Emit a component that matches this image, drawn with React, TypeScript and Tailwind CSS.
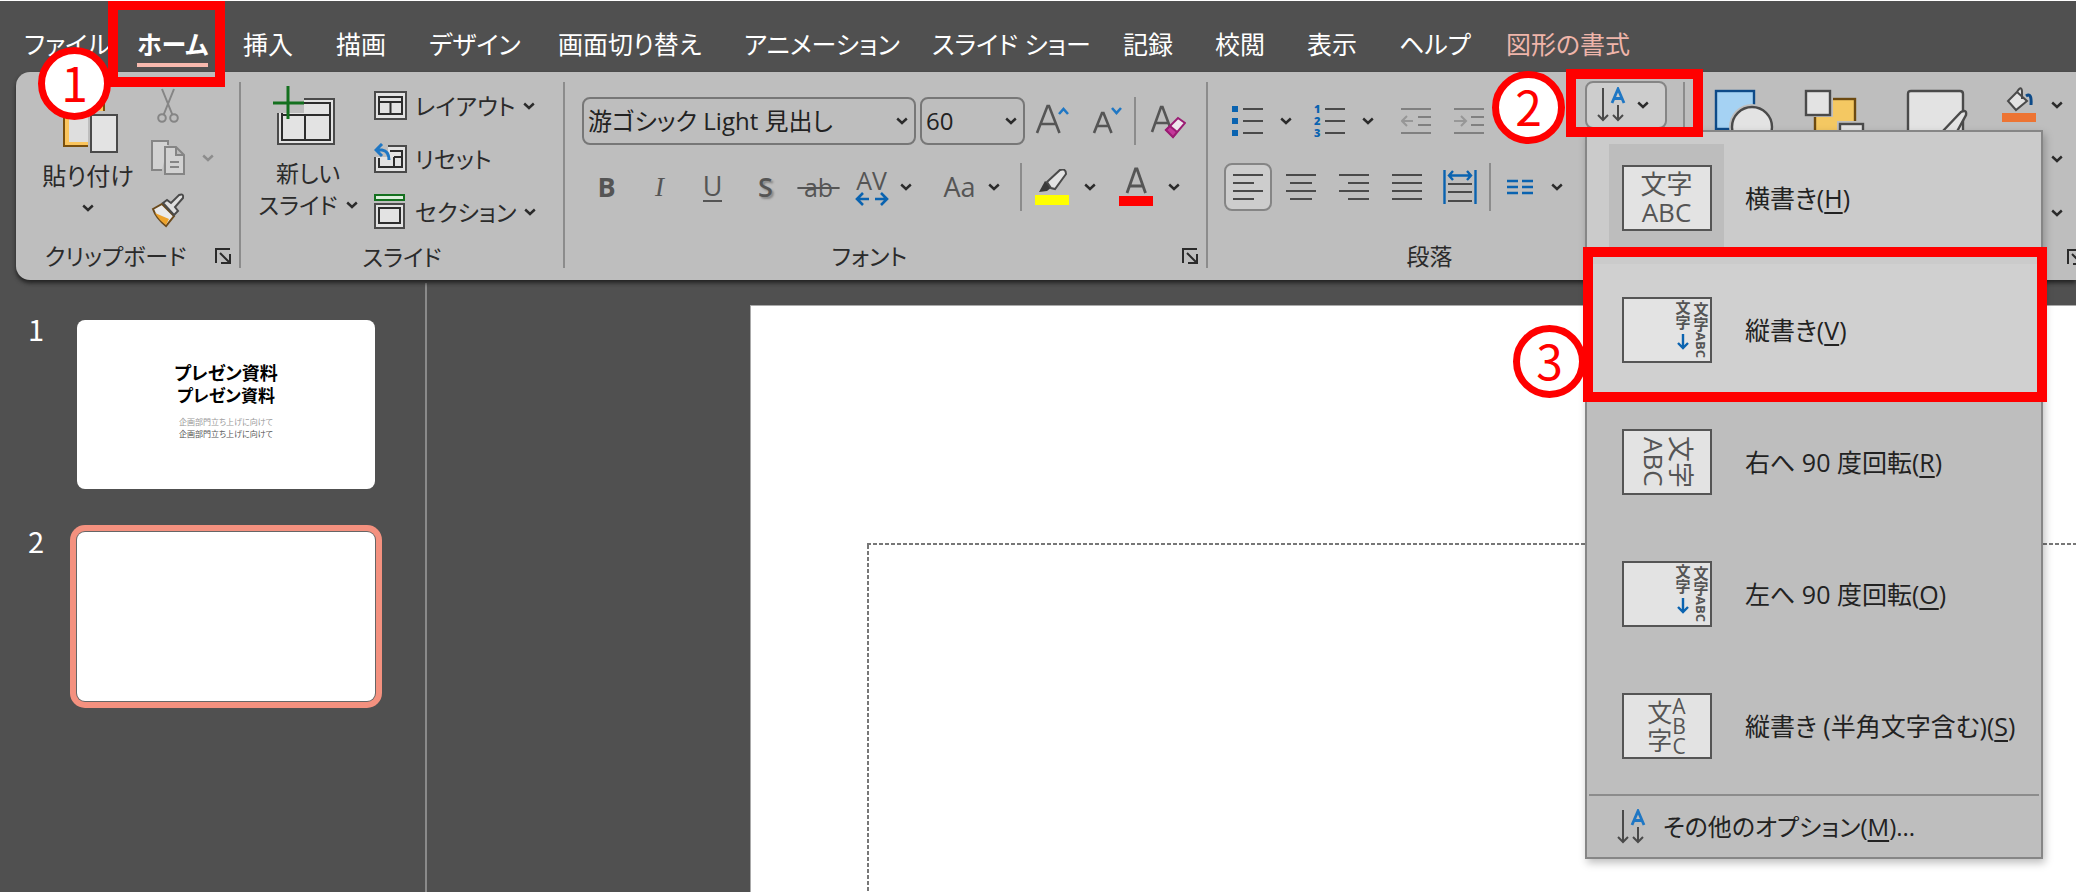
import React from "react";

type P = { children?: React.ReactNode; className?: string };

const INK = "#4a4a4a";
const BLUE = "#0a63b0";

function Chevron({ muted = false }: { muted?: boolean }) {
  return (
    <svg width="12" height="8" viewBox="0 0 12 8" fill="none" aria-hidden="true" className="shrink-0">
      <path d="M1.2 1.5 L6 6 L10.8 1.5" stroke={muted ? "#8d8d8d" : "#2b2b2b"} strokeWidth="2.4" />
    </svg>
  );
}

function Drop({ label, muted }: { label: string; muted?: boolean }) {
  return (
    <button aria-label={label} className="flex h-8 w-4 shrink-0 items-center justify-center">
      <Chevron muted={muted} />
    </button>
  );
}

function Tool({ label, children, className = "w-[53px]" }: P & { label: string }) {
  return (
    <button aria-label={label} className={`flex h-12 shrink-0 items-center justify-center ${className}`}>
      {children}
    </button>
  );
}

function Launcher({ label }: { label: string }) {
  return (
    <button aria-label={label} className="flex w-8 shrink-0 items-center justify-center">
      <svg width="18" height="18" viewBox="0 0 18 18" fill="none" stroke="#2b2b2b" strokeWidth="2">
        <path d="M2 16V2H16M6 6L15 15M16 7V16H7" />
      </svg>
    </button>
  );
}

function Group({ title, launcher = true, className, children }: P & { title: string; launcher?: boolean }) {
  return (
    <section className={`flex shrink-0 flex-col ${className}`} aria-label={title}>
      {children}
      <div className="mt-auto flex h-11 items-center pb-1 text-[23px] leading-8">
        <h2 className="flex-1 text-center whitespace-nowrap">{title}</h2>
        {launcher && <Launcher label={`${title}の設定`} />}
      </div>
    </section>
  );
}

function Divider() {
  return <div className="mt-[10px] h-[186px] w-[2px] shrink-0 bg-[#8c8c8c]" />;
}

function SmallDivider() {
  return <div className="h-12 w-[2px] shrink-0 bg-[#8c8c8c]" />;
}

function Lines({ rows, color = INK }: { rows: [number, number][]; color?: string }) {
  return (
    <svg width="30" height="30" viewBox="0 0 30 30" stroke={color} strokeWidth="2" aria-hidden="true">
      {rows.map(([a, b], i) => (
        <path key={i} d={`M${a} ${3 + i * 8}H${b}`} />
      ))}
    </svg>
  );
}

function DirectionIcon() {
  return (
    <svg width="30" height="36" viewBox="0 0 30 36" fill="none" stroke={INK} strokeWidth="2" aria-hidden="true">
      <path d="M6 1V33M1 28L6 33L11 28" />
      <path d="M21 18V33M16 28L21 33L26 28" />
      <path d="M15 16L21 2L27 16M17 11.5H25" stroke="#1f77c4" strokeWidth="2.8" />
    </svg>
  );
}

const tabs = [
  { name: "ファイル", w: "w-[113px]" },
  { name: "ホーム", w: "w-[106px]", active: true },
  { name: "挿入", w: "w-[93px]" },
  { name: "描画", w: "w-[93px]" },
  { name: "デザイン", w: "w-[129px]" },
  { name: "画面切り替え", w: "w-[186px]" },
  { name: "アニメーション", w: "w-[188px]" },
  { name: "スライド ショー", w: "w-[191px]" },
  { name: "記録", w: "w-[92px]" },
  { name: "校閲", w: "w-[92px]" },
  { name: "表示", w: "w-[92px]" },
  { name: "ヘルプ", w: "w-[107px]" },
  { name: "図形の書式", w: "w-[140px]", accent: true },
];

function Tabs() {
  return (
    <nav className="flex h-[71px] shrink-0 items-start pt-[22px] pl-6 text-[25px] leading-[42px] text-white">
      {tabs.map((t) => (
        <div key={t.name} className={`shrink-0 ${t.w}`}>
          <button
            className={
              t.active
                ? "border-b-4 border-[#f8b9ae] leading-[38px] font-bold whitespace-nowrap"
                : t.accent
                  ? "whitespace-nowrap text-[#efb5aa]"
                  : "whitespace-nowrap"
            }
          >
            {t.name}
          </button>
        </div>
      ))}
    </nav>
  );
}

function Clipboard() {
  return (
    <Group title="クリップボード" className="w-[223px] pl-2">
      <div className="flex gap-3 pt-[10px] pl-4">
        <button className="flex w-[96px] flex-col items-center text-[24px] leading-9 whitespace-nowrap">
          <svg width="60" height="72" viewBox="0 0 60 72" fill="none" aria-hidden="true" className="mb-1">
            <path d="M6 18H46V64H6Z" fill="#fbc55d" stroke="#7a4f0c" strokeWidth="2" />
            <path d="M11 22H41V60H11Z" fill="#dedede" />
            <rect x="30" y="29" width="32" height="43" fill="#bebebe" />
            <rect x="33" y="33" width="26" height="37" fill="#e3e3e3" stroke={INK} strokeWidth="2" />
          </svg>
          <span>貼り付け</span>
          <span className="flex h-7 items-center">
            <Chevron />
          </span>
        </button>
        <div className="flex flex-col gap-1">
          <Tool label="切り取り" className="w-10">
            <svg width="22" height="36" viewBox="0 0 22 36" fill="none" stroke="#858585" strokeWidth="2">
              <path d="M5 1L15.500 27M17 1L6.500 27" />
              <circle cx="5" cy="30" r="3.800" />
              <circle cx="17" cy="30" r="3.800" />
            </svg>
          </Tool>
          <div className="flex items-center gap-3">
            <Tool label="コピー" className="w-10">
              <svg width="36" height="36" viewBox="0 0 36 36" fill="#d2d2d2" stroke="#858585" strokeWidth="2">
                <path d="M12 30H2V1H18V5" />
                <path d="M15 7H26L34 15V34H15Z M26 7V15H34" />
                <path d="M20 22H29M20 27H29" />
              </svg>
            </Tool>
            <Drop label="コピーのオプション" muted />
          </div>
          <Tool label="書式のコピー" className="w-10">
            <svg width="36" height="36" viewBox="0 0 36 36" aria-hidden="true">
              <path d="M3 17L12 12L24 24L16 34Q6 26 3 17Z" fill="#e9e9e9" stroke="#6b4a1c" strokeWidth="2" />
              <path d="M5 21L19 27L16 33Q9 28 5 21Z" fill="#eda22a" />
              <path d="M13 11L17 8L21 11L29 3Q34 1 33 6L25 15L28 19L24 23Z" fill="#dedede" stroke={INK} strokeWidth="2" />
            </svg>
          </Tool>
        </div>
      </div>
    </Group>
  );
}

function SlideRow({ icon, label, drop = true }: { icon: React.ReactNode; label: string; drop?: boolean }) {
  return (
    <button className="flex h-[53px] items-center gap-2 whitespace-nowrap">
      {icon}
      <span>{label}</span>
      {drop && <Chevron />}
    </button>
  );
}

function Slides() {
  return (
    <Group title="スライド" launcher={false} className="w-[322px]">
      <div className="flex gap-4 pt-[7px] pl-[17px] text-[23px] leading-8">
        <button className="flex w-[100px] flex-col items-center pt-[6px] whitespace-nowrap">
          <svg width="72" height="62" viewBox="0 0 72 62" fill="none" aria-hidden="true" className="mb-[10px]">
            <path d="M6 14H62V59H6Z" fill="#e3e3e3" stroke={INK} strokeWidth="2" />
            <path d="M10 18H58V55H10ZM10 30H58M33 30V55" stroke="#2d2d2d" strokeWidth="2" />
            <path d="M0 9H32V28H0Z" fill="#bebebe" />
            <path d="M16 1V34M1 18H32" stroke="#14701f" strokeWidth="3" />
          </svg>
          <span>新しい</span>
          <span className="flex items-center gap-2">
            スライド
            <Chevron />
          </span>
        </button>
        <div className="flex flex-col items-start">
          <SlideRow
            label="レイアウト"
            icon={
              <svg width="33" height="29" viewBox="0 0 33 29" fill="none" aria-hidden="true">
                <rect x="1" y="1" width="31" height="27" fill="#e3e3e3" stroke={INK} strokeWidth="2" />
                <path d="M5 6H28V23H5ZM5 11H28M16.500 11V23" stroke="#2d2d2d" strokeWidth="2" />
              </svg>
            }
          />
          <SlideRow
            label="リセット"
            drop={false}
            icon={
              <svg width="33" height="31" viewBox="0 0 33 31" fill="none" aria-hidden="true">
                <rect x="1" y="3" width="31" height="26" fill="#e3e3e3" stroke={INK} strokeWidth="2" />
                <path d="M5 15V24H28V8H16M20 14H28M20 14V24" stroke="#2d2d2d" strokeWidth="2" />
                <path d="M0 0H14V14H0Z" fill="#bebebe" />
                <path d="M8 1L2 7L8 13M2 7H8Q15 8 15 17" stroke="#1f77c4" strokeWidth="3" />
              </svg>
            }
          />
          <SlideRow
            label="セクション"
            icon={
              <svg width="33" height="35" viewBox="0 0 33 35" fill="none" aria-hidden="true">
                <rect x="1" y="1" width="29" height="5" fill="#dcefdc" stroke="#14701f" strokeWidth="2" />
                <rect x="1" y="10" width="29" height="24" fill="#e3e3e3" stroke={INK} strokeWidth="2" />
                <rect x="5" y="14" width="21" height="15" stroke="#2d2d2d" strokeWidth="2" />
              </svg>
            }
          />
        </div>
      </div>
    </Group>
  );
}

function Picker({ label, value, className }: { label: string; value: string; className: string }) {
  return (
    <label className={`flex h-12 shrink-0 items-center rounded-lg border-2 border-[#777] pr-[6px] ${className}`}>
      <select aria-label={label} defaultValue={value} className="min-w-0 flex-1 appearance-none bg-transparent pl-1 text-[24px] leading-8 text-[#222]">
        <option>{value}</option>
      </select>
      <Chevron />
    </label>
  );
}

function FontGroup() {
  return (
    <Group title="フォント" className="w-[641px] pt-[25px]">
      <div className="flex items-center pl-[17px]">
        <Picker label="フォント名" value="游ゴシック Light 見出し" className="w-[334px]" />
        <Picker label="フォント サイズ" value="60" className="ml-1 w-[105px]" />
        <Tool label="フォント サイズの拡大" className="w-14">
          <svg width="36" height="34" viewBox="0 0 36 34" fill="none">
            <path d="M2 29L12.500 2H14L24.500 29M6 20H20.500" stroke="#555" strokeWidth="2.600" />
            <path d="M24 10L28.500 5L33 10" stroke="#1f77c4" strokeWidth="2.600" />
          </svg>
        </Tool>
        <Tool label="フォント サイズの縮小">
          <svg width="32" height="34" viewBox="0 0 32 34" fill="none">
            <path d="M2 29L10 9H11.500L19.500 29M5 22H16.500" stroke="#555" strokeWidth="2.600" />
            <path d="M20 4L24.500 9L29 4" stroke="#1f77c4" strokeWidth="2.600" />
          </svg>
        </Tool>
        <SmallDivider />
        <Tool label="書式のクリア" className="ml-1 w-14">
          <svg width="36" height="36" viewBox="0 0 36 36" fill="none">
            <path d="M2 29L11 4H12.500L20 24M5.500 20H18" stroke="#555" strokeWidth="2.600" />
            <path d="M16 27L28 15L35 20L23 34Z" fill="#efe6ed" stroke="#9b1c73" strokeWidth="2" />
            <path d="M16 27L20 23L27 29L23 34Z" fill="#c4389a" stroke="#9b1c73" strokeWidth="2" />
          </svg>
        </Tool>
      </div>
      <div className="mt-[18px] flex items-center pl-[15px] text-[27px] leading-8 text-[#555]">
        <Tool label="太字">
          <b>B</b>
        </Tool>
        <Tool label="斜体">
          <i className="font-['Liberation_Serif',serif]">I</i>
        </Tool>
        <Tool label="下線">
          <span className="border-b-2 border-[#555] leading-7">U</span>
        </Tool>
        <Tool label="影">
          <span className="font-semibold [text-shadow:2px_2px_2px_#888]">S</span>
        </Tool>
        <Tool label="取り消し線">
          <s className="text-[25px] decoration-2">&nbsp;ab&nbsp;</s>
        </Tool>
        <Tool label="文字の間隔">
          <span className="flex flex-col items-center text-[25px] leading-6">
            AV
            <svg width="34" height="14" viewBox="0 0 34 14" fill="none" stroke={BLUE} strokeWidth="2.600" aria-hidden="true">
              <path d="M8 1L2 7L8 13M2 7H14M26 1L32 7L26 13M32 7H20" />
            </svg>
          </span>
        </Tool>
        <Drop label="文字の間隔のオプション" />
        <Tool label="文字種の変換" className="ml-[19px] w-[53px]">
          Aa
        </Tool>
        <Drop label="文字種の変換のオプション" />
        <div className="w-[18px]" />
        <SmallDivider />
        <Tool label="蛍光ペンの色" className="w-[60px]">
          <svg width="34" height="36" viewBox="0 0 34 36" fill="none">
            <rect y="26" width="34" height="10" fill="#ffff00" />
            <path d="M4 23L10 12L17 18L12 22Z" fill="#3a3a3a" />
            <path d="M12 13L25 1Q31 -1 31 5L20 20L16 19Z" fill="#e3e3e3" stroke={INK} strokeWidth="2" />
          </svg>
        </Tool>
        <Drop label="蛍光ペンのオプション" />
        <Tool label="フォントの色" className="ml-2 w-[60px]">
          <svg width="34" height="42" viewBox="0 0 34 42" fill="none">
            <path d="M8 27L16.500 3H18L26.500 27M11 20H23" stroke="#555" strokeWidth="2.800" />
            <rect y="30" width="34" height="10" fill="#ff0000" />
          </svg>
        </Tool>
        <Drop label="フォントの色のオプション" />
      </div>
    </Group>
  );
}

function ListIcon({ numbered = false }: { numbered?: boolean }) {
  return (
    <svg width="32" height="40" viewBox="0 0 32 40" aria-hidden="true">
      {[8, 20, 32].map((y, i) => (
        <g key={y}>
          {numbered ? (
            <text x="0" y={y + 4} fontSize="11" fontWeight="800" fill={BLUE}>
              {i + 1}
            </text>
          ) : (
            <rect x="0" y={y - 3} width="6" height="6" fill={BLUE} />
          )}
          <path d={`M11 ${y}H31`} stroke={INK} strokeWidth="2" />
        </g>
      ))}
    </svg>
  );
}

function IndentIcon({ out = false }: { out?: boolean }) {
  return (
    <svg width="30" height="30" viewBox="0 0 30 30" fill="none" stroke="#808080" strokeWidth="2" aria-hidden="true">
      <path d="M0 3H30M17 11H30M17 19H30M0 27H30" />
      <path d={out ? "M6 10L1 15L6 20M1 15H12" : "M7 10L12 15L7 20M12 15H0"} stroke="#979797" />
    </svg>
  );
}

function Paragraph() {
  return (
    <Group title="段落" className="w-[475px]">
      <div className="flex justify-between pr-4 pl-4">
        <div className="flex flex-col gap-[18px] pt-[25px]">
          <div className="flex items-center">
            <Tool label="箇条書き" className="w-12">
              <ListIcon />
            </Tool>
            <div className="mr-3 ml-[6px] flex">
              <Drop label="箇条書きのオプション" />
            </div>
            <Tool label="段落番号" className="w-12">
              <ListIcon numbered />
            </Tool>
            <div className="mr-4 ml-[6px] flex">
              <Drop label="段落番号のオプション" />
            </div>
            <Tool label="インデントを減らす" className="w-12">
              <IndentIcon out />
            </Tool>
            <Tool label="インデントを増やす" className="ml-[5px] w-12">
              <IndentIcon />
            </Tool>
          </div>
          <div className="flex items-center gap-[5px]">
            <Tool label="左揃え" className="w-12 rounded-lg border-2 border-[#858585] bg-[#cdcdcd]">
              <Lines rows={[[0, 30], [0, 21], [0, 30], [0, 21]]} />
            </Tool>
            <Tool label="中央揃え" className="w-12">
              <Lines rows={[[0, 30], [4, 26], [0, 30], [4, 26]]} />
            </Tool>
            <Tool label="右揃え" className="w-12">
              <Lines rows={[[0, 30], [9, 30], [0, 30], [9, 30]]} />
            </Tool>
            <Tool label="両端揃え" className="w-12">
              <Lines rows={[[0, 30], [0, 30], [0, 30], [0, 30]]} />
            </Tool>
            <Tool label="均等割り付け" className="w-12">
              <svg width="34" height="34" viewBox="0 0 34 34" fill="none" strokeWidth="2">
                <path d="M5 14H29M5 22H29M5 31H29" stroke={INK} />
                <path d="M1.500 0V34M32.500 0V34M10 1L6 5.500L10 10M24 1L28 5.500L24 10M6 5.500H28" stroke={BLUE} strokeWidth="2.400" />
              </svg>
            </Tool>
            <SmallDivider />
            <Tool label="段組み" className="w-12">
              <svg width="26" height="16" viewBox="0 0 26 16" stroke={BLUE} strokeWidth="2.600">
                <path d="M0 2H11M15 2H26M0 8H11M15 8H26M0 14H11M15 14H26" />
              </svg>
            </Tool>
            <Drop label="段組みのオプション" />
          </div>
        </div>
        <div className="relative pt-[9px]">
          <button
            aria-label="文字列の方向"
            aria-expanded="true"
            className="flex h-[48px] w-[82px] items-center gap-[10px] rounded-lg border-2 border-[#858585] bg-[#cdcdcd] pl-[10px]"
          >
            <DirectionIcon />
            <Chevron />
          </button>
          <DirectionMenu />
        </div>
      </div>
    </Group>
  );
}

function Preview({ children, className = "" }: P) {
  return (
    <span
      className={`flex h-[66px] w-[90px] shrink-0 items-center justify-center border-2 border-[#555] bg-[#e3e3e3] text-[#555] ${className}`}
    >
      {children}
    </span>
  );
}

function VerticalPreview() {
  return (
    <Preview className="justify-end">
      <span className="h-[60px] text-[15px] leading-[18px] font-bold whitespace-nowrap [writing-mode:vertical-rl]">
        文字<span className="text-[13px]">ABC</span>
        <br />
        <span className="flex items-center gap-1">
          文字
          <svg width="12" height="16" viewBox="0 0 12 16" fill="none" stroke={BLUE} strokeWidth="2.400" aria-hidden="true">
            <path d="M6 0V14M1 9L6 14L11 9" />
          </svg>
        </span>
      </span>
    </Preview>
  );
}

const menuItems = [
  {
    text: "横書き",
    keyName: "H",
    tone: "bg-[#cbcbcb]",
    iconTone: "bg-[#bdbdbd]",
    icon: (
      <Preview>
        <span className="text-center text-[26px] leading-[28px]">
          文字
          <br />
          ABC
        </span>
      </Preview>
    ),
  },
  { text: "縦書き", keyName: "V", tone: "bg-[#d0d0d0]", iconTone: "", icon: <VerticalPreview /> },
  {
    text: "右へ 90 度回転",
    keyName: "R",
    tone: "",
    iconTone: "",
    icon: (
      <Preview>
        <span className="text-[26px] leading-[27px] [text-orientation:sideways] [writing-mode:vertical-rl]">
          文字
          <br />
          ABC
        </span>
      </Preview>
    ),
  },
  { text: "左へ 90 度回転", keyName: "O", tone: "", iconTone: "", icon: <VerticalPreview /> },
  {
    text: "縦書き (半角文字含む)",
    keyName: "S",
    tone: "",
    iconTone: "",
    icon: (
      <Preview>
        <span className="text-[25px] leading-[28px]">
          文
          <br />字
        </span>
        <span className="text-center text-[21px] leading-[20px]">
          A<br />B<br />C
        </span>
      </Preview>
    ),
  },
];

function DirectionMenu() {
  return (
    <div
      role="menu"
      className="absolute top-[58px] left-0 z-10 w-[458px] border-2 border-[#868686] bg-[#bebebe] text-[25px] leading-8 text-[#222] shadow-[2px_4px_8px_#00000040]"
    >
      {menuItems.map((m) => (
        <button
          key={m.keyName}
          role="menuitem"
          className={`flex h-[132px] w-full items-center gap-[21px] pl-[22px] whitespace-nowrap ${m.tone}`}
        >
          <span className={`flex h-[108px] w-[115px] shrink-0 items-center justify-center ${m.iconTone}`}>{m.icon}</span>
          <span>
            {m.text}(<u className="underline-offset-4">{m.keyName}</u>)
          </span>
        </button>
      ))}
      <hr className="mx-[2px] mt-[2px] border-t-2 border-[#8c8c8c]" />
      <button role="menuitem" className="flex h-[61px] w-full items-center gap-4 pl-[30px] text-[24px] whitespace-nowrap">
        <DirectionIcon />
        <span>
          その他のオプション(<u className="underline-offset-4">M</u>)...
        </span>
      </button>
    </div>
  );
}

function Drawing() {
  return (
    <Group title="図形描画" className="min-w-[406px] grow">
      <div className="flex items-start pt-[9px] pl-[29px]">
        <Tool label="図形" className="mt-2 h-[60px] w-[62px]">
          <svg width="62" height="60" viewBox="0 0 62 60">
            <rect x="2" y="2" width="38" height="38" fill="#a5d2f3" stroke="#0d4a88" strokeWidth="2.400" />
            <circle cx="38" cy="38" r="23" fill="#bebebe" />
            <circle cx="38" cy="38" r="20" fill="#e3e3e3" stroke={INK} strokeWidth="2.400" />
          </svg>
        </Tool>
        <Tool label="配置" className="mt-2 ml-7 h-[60px] w-[62px]">
          <svg width="62" height="60" viewBox="0 0 62 60" strokeWidth="2.400">
            <rect x="11" y="10" width="40" height="40" fill="#f4c862" stroke="#6d4a10" />
            <rect x="0" y="0" width="29" height="28" fill="#bebebe" />
            <rect x="2" y="2" width="24" height="24" fill="#e3e3e3" stroke={INK} />
            <rect x="33" y="32" width="30" height="30" fill="#bebebe" />
            <rect x="36" y="35" width="23" height="23" fill="#e3e3e3" stroke={INK} />
          </svg>
        </Tool>
        <Tool label="クイック スタイル" className="mt-2 ml-10 h-[60px] w-[62px]">
          <svg width="62" height="60" viewBox="0 0 62 60" strokeWidth="2.400" stroke={INK}>
            <path d="M2 60V5Q2 2 5 2H54Q57 2 57 5V60" fill="#e3e3e3" />
            <path d="M36 43L55 23Q61 20 60 26L48 48Z" fill="#e3e3e3" />
          </svg>
        </Tool>
        <div className="ml-[31px] flex flex-col">
          <div className="flex items-center gap-[10px]">
            <Tool label="図形の塗りつぶし" className="w-10">
              <svg width="34" height="36" viewBox="0 0 34 36">
                <rect y="26" width="34" height="9" fill="#ed7433" />
                <path d="M24 9Q30 5 29 18" fill="none" stroke="#0d4a88" strokeWidth="3" />
                <path d="M6 14L15 5Q19 -2 20 4V12M15 5L25 14L14 23L6 14Z" fill="#e3e3e3" stroke={INK} strokeWidth="2" />
              </svg>
            </Tool>
            <Drop label="塗りつぶしのオプション" />
          </div>
          <div className="flex h-[60px] items-center justify-end">
            <Drop label="枠線のオプション" />
          </div>
          <div className="flex h-12 items-center justify-end">
            <Drop label="効果のオプション" />
          </div>
        </div>
      </div>
    </Group>
  );
}

function Thumbnails() {
  return (
    <ol className="flex w-[427px] shrink-0 flex-col gap-[43px] border-r-2 border-[#8a8a8a] pt-[37px] pl-7">
      <li className="flex items-start">
        <span className="w-[49px] font-['Noto_Sans_CJK_JP',sans-serif] text-[29px] leading-4 text-white">1</span>
        <button className="flex h-[169px] w-[298px] flex-col items-center rounded-lg bg-white pt-[40px] text-black">
          <span className="font-['Noto_Sans_CJK_JP',sans-serif] text-[18px] leading-6 font-bold">プレゼン資料</span>
          <span className="font-['Noto_Sans_CJK_JP',sans-serif] text-[17px] leading-[22px] font-bold">プレゼン資料</span>
          <span className="mt-[10px] text-[8px] leading-3 text-[#999]">企画部門立ち上げに向けて</span>
          <span className="text-[8px] leading-3 text-[#555]">企画部門立ち上げに向けて</span>
        </button>
      </li>
      <li className="flex items-start">
        <span className="w-[49px] font-['Noto_Sans_CJK_JP',sans-serif] text-[29px] leading-4 text-white">2</span>
        <button
          aria-label="スライド 2"
          className="h-[169px] w-[298px] rounded-lg bg-white shadow-[0_0_0_1px_#666,0_0_0_7px_#f4917f]"
        />
      </li>
    </ol>
  );
}

function Circle({ n, className }: { n: number; className: string }) {
  return (
    <div
      className={`absolute flex size-[73px] items-center justify-center rounded-full border-[7px] border-[#f00] bg-white pb-[5px] font-['Noto_Sans_CJK_JP',sans-serif] text-[48px] leading-none text-[#f00] ${className}`}
    >
      {n}
    </div>
  );
}

export default function App() {
  return (
    <div
      lang="ja"
      className="relative flex h-screen flex-col overflow-hidden border-t border-white bg-[#505050] font-['Open_Sans','Noto_Sans_CJK_JP',sans-serif] text-[#2b2b2b] [font-feature-settings:'palt']"
    >
      <Tabs />
      <div className="relative z-10 ml-4 flex h-[208px] shrink-0 rounded-l-[14px] bg-[#bebebe] shadow-[0_3px_4px_#222]">
        <Clipboard />
        <Divider />
        <Slides />
        <Divider />
        <FontGroup />
        <Divider />
        <Paragraph />
        <Divider />
        <Drawing />
      </div>
      <main className="flex min-h-0 flex-1 pt-[3px]">
        <Thumbnails />
        <div className="flex flex-1 pt-[22px] pl-[323px]">
          <div className="flex flex-1 border-t border-l border-[#aaa] bg-white pt-[237px] pl-[116px]">
            <div className="flex flex-1 flex-col">
              <div className="h-[2px] bg-[repeating-linear-gradient(90deg,#777_0_4px,transparent_4px_6px)]" />
              <div className="w-[2px] flex-1 bg-[repeating-linear-gradient(180deg,#777_0_4px,transparent_4px_6px)]" />
            </div>
          </div>
        </div>
      </main>
      <div className="pointer-events-none">
        <div className="absolute -top-px left-[108px] z-20 h-[87px] w-[117px] border-10 border-[#f00]" />
        <Circle n={1} className="top-[46px] left-[38px] z-20" />
        <Circle n={2} className="top-[70px] left-[1492px] z-20" />
        <div className="absolute top-[68px] left-[1566px] z-20 h-[68px] w-[137px] border-10 border-[#f00]" />
        <Circle n={3} className="top-[324px] left-[1513px] z-20" />
        <div className="absolute top-[246px] left-[1583px] z-20 h-[155px] w-[464px] border-10 border-[#f00]" />
      </div>
    </div>
  );
}
